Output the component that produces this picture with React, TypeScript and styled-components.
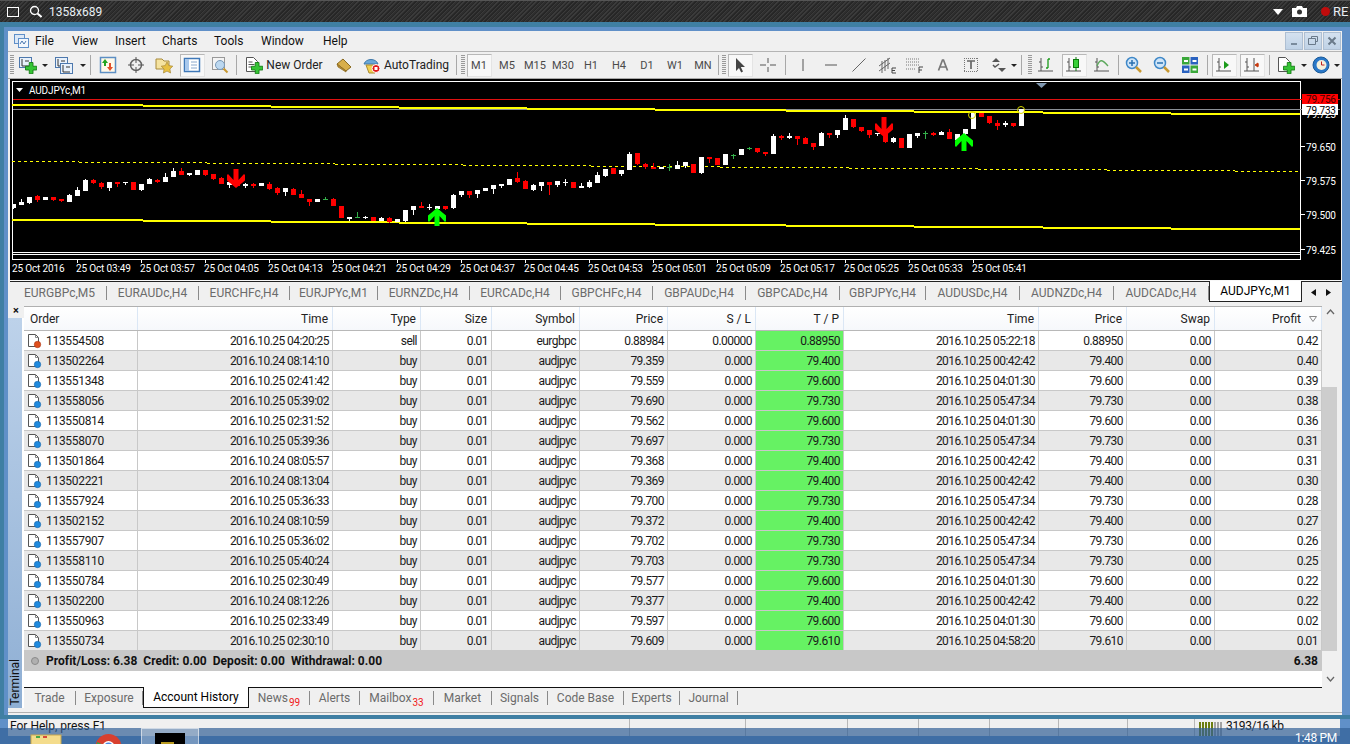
import React from "react";
import styled, { createGlobalStyle } from "styled-components";

const UI_FONT = `Roboto, "Noto Sans", "Liberation Sans", sans-serif`;

const GlobalStyle = createGlobalStyle`
  html, body { margin: 0; padding: 0; height: 744px; overflow: hidden; background: #6090c8; }
  body { font-family: ${UI_FONT}; font-size: 12px; color: #1a1a1a; }
  * { box-sizing: border-box; }
`;

// Top recorder bar
const RecorderBar = styled.div`
  height: 22px;
  display: flex;
  align-items: center;
  color: #e8eef2;
  font-size: 12px;
  border-top: 1px solid #555;
  background: repeating-linear-gradient(135deg, #262626 0 1px, #3b3b3b 1px 2px, #2e2e2e 2px 3px);
`;
const RecLeft = styled.div`
  display: flex;
  align-items: center;
  padding-left: 7px;
  gap: 10px;
  flex: 1;
`;
const RecSize = styled.span`
  margin-left: -3px;
`;
const RecRight = styled.div`
  display: flex;
  align-items: center;
  font-size: 13px;
`;
const CameraIcon = styled.svg`
  margin: 0 14px 0 9px;
`;
const RecLabel = styled.span`
  width: 17px;
  margin-left: 3px;
  overflow: hidden;
  white-space: nowrap;
`;

// Blue window frame
const Frame = styled.div`
  border-top: 5px solid #3f7fa3;
  border-left: 4px solid #3f7fa3;
  background: #6090c8;
  padding: 4px 8px 0 4px;
`;
const Window = styled.div`
  width: 1334px;
  background: #f0f0f0;
`;

const MenuBar = styled.div`
  height: 21px;
  display: flex;
  align-items: center;
  padding-left: 5px;
  border-bottom: 1px solid #b4b4b4;
`;
const AppIcon = styled.svg`
  margin-right: 6px;
`;
const MenuItem = styled.span<{ $w: number }>`
  width: ${(p) => p.$w}px;
  color: #111;
  font-size: 12px;
`;
const WinButtons = styled.div`
  margin-left: auto;
  margin-right: 1px;
  display: flex;
  gap: 1px;
`;
const WinButton = styled.div`
  width: 18px;
  height: 18px;
  background: linear-gradient(#d4e1ef, #bfd2e6);
  border: 1px solid #aebfd2;
  display: flex;
  align-items: center;
  justify-content: center;
`;

const Toolbar = styled.div`
  height: 27px;
  display: flex;
  align-items: center;
  padding-left: 2px;
  border-bottom: 1px solid #a8a8a8;
`;
const Grip = styled.div<{ $ml?: number }>`
  width: 4px;
  height: 20px;
  margin-left: ${(p) => p.$ml ?? 0}px;
  flex: none;
  background: repeating-linear-gradient(#9a9a9a 0 1px, transparent 1px 2px);
`;
const Sep = styled.div<{ $w: number }>`
  width: ${(p) => p.$w}px;
  height: 20px;
  flex: none;
  display: flex;
  justify-content: center;
  &::after { content: ""; width: 1px; background: #a8a8a8; }
`;
const ToolBtn = styled.div<{ $w?: number }>`
  width: ${(p) => p.$w ?? 28}px;
  height: 24px;
  flex: none;
  display: flex;
  align-items: center;
  justify-content: center;
  gap: 3px;
  color: #222;
  font-size: 12px;
`;
const ActiveFace = styled.div`
  width: 25px;
  height: 23px;
  display: flex;
  align-items: center;
  justify-content: center;
  border: 1px solid;
  border-color: #b8b8b8 #e4e4e4 #e4e4e4 #b8b8b8;
  background: #f8f8f8;
  background-image: radial-gradient(#e6e6e6 0.5px, transparent 0.6px);
  background-size: 2px 2px;
`;
const Period = styled.span`
  font-size: 11px;
  color: #4a4a4a;
`;
const CaretBox = styled.div<{ $w: number }>`
  width: ${(p) => p.$w}px;
  flex: none;
  display: flex;
  justify-content: center;
  &::after {
    content: "";
    border-left: 3px solid transparent;
    border-right: 3px solid transparent;
    border-top: 3px solid #222;
  }
`;

// Chart
const ChartWrap = styled.div`
  margin-left: 2px;
  width: 1331px;
  height: 202px;
  background: #000;
  border-bottom: 1px solid #f8f8f8;
`;
const ChartSvg = styled.svg`
  display: block;
  text {
    font-family: ${UI_FONT};
    font-size: 10px;
    letter-spacing: -0.15px;
    fill: #fff;
  }
  text.tag { fill: #000; }
  text.tagRed { fill: #400000; }
  rect, line, path.step { shape-rendering: crispEdges; }
`;

// Chart tabs
const ChartTabs = styled.div`
  height: 22px;
  display: flex;
  align-items: center;
  padding-left: 3px;
  background: #f0f0f0;
  border-top: 1px solid #222;
  margin-left: 2px;
`;
const ChartTab = styled.div<{ $w: number; $on?: boolean }>`
  width: ${(p) => p.$w}px;
  height: ${(p) => (p.$on ? "21px" : "14px")};
  margin-top: ${(p) => (p.$on ? "-1px" : "0")};
  align-self: ${(p) => (p.$on ? "flex-start" : "center")};
  flex: none;
  display: flex;
  align-items: center;
  justify-content: center;
  color: ${(p) => (p.$on ? "#000" : "#6b6b6b")};
  font-size: 12px;
  background: ${(p) => (p.$on ? "#fff" : "transparent")};
  ${(p) =>
    p.$on
      ? "border: 1px solid #222; border-top: none;"
      : "border-right: 1px solid #8a8a8a;"}
`;
const TabArrows = styled.div`
  width: 38px;
  height: 21px;
  margin-top: -1px;
  align-self: flex-start;
  display: flex;
  align-items: center;
  justify-content: space-around;
  padding: 0 4px;
  border-top: 1px solid #222;
`;

// Terminal
const Terminal = styled.div`
  display: flex;
  height: 405px;
`;
const Rail = styled.div`
  width: 16px;
  flex: none;
  display: flex;
  flex-direction: column;
  background: #fff;
`;
const RailClose = styled.div`
  height: 15px;
  background: #f0f0f0;
  font-size: 11px;
  font-weight: 700;
  text-align: center;
  line-height: 16px;
  color: #111;
`;
const RailBody = styled.div`
  flex: 1;
  margin-right: 2px;
  display: flex;
  align-items: flex-end;
  justify-content: center;
  padding-bottom: 2px;
  background: linear-gradient(#bdd2ea, #8fafd4);
`;
const RailLabel = styled.span`
  writing-mode: vertical-rl;
  transform: rotate(180deg);
  font-size: 12px;
  color: #111;
`;
const TermBody = styled.div`
  width: 1316px;
  flex: none;
  display: flex;
  flex-direction: column;
`;
const TermMain = styled.div`
  height: 384px;
  display: flex;
  background: #fff;
`;
const TableWrap = styled.div`
  width: 1298px;
  flex: none;
  padding-top: 3px;
  background: linear-gradient(#f0f0f0 3px, #fff 3px);
`;
const COLS = "114px 195px 88px 71px 88px 88px 88px 88px 195px 88px 88px 107px";
const HeadRow = styled.div`
  display: grid;
  grid-template-columns: ${COLS};
  height: 25px;
  border-top: 1px solid #b0b0b0;
  background: linear-gradient(#ffffff, #f6f8fb);
  border-bottom: 1px solid #b8b8b8;
`;
const HeadCell = styled.div<{ $left?: boolean }>`
  display: flex;
  align-items: center;
  justify-content: ${(p) => (p.$left ? "flex-start" : "flex-end")};
  padding: 0 4px 0 6px;
  gap: 8px;
  border-right: 1px solid #dbe7f5;
  color: #222;
`;
const Row = styled.div<{ $alt: boolean }>`
  display: grid;
  grid-template-columns: ${COLS};
  height: 20px;
  background: ${(p) => (p.$alt ? "#e8e8e8" : "#fff")};
  border-bottom: 1px solid #c8c8c8;
`;
const Cell = styled.div<{ $green?: boolean }>`
  display: flex;
  align-items: center;
  justify-content: flex-end;
  padding-right: 3px;
  border-right: 1px solid #c8c8c8;
  letter-spacing: -0.55px;
  color: #1a1a1a;
  white-space: nowrap;
  background: ${(p) => (p.$green ? "#66f263" : "transparent")};
`;
const OrderCell = styled(Cell)`
  justify-content: flex-start;
  padding-left: 3px;
  gap: 4px;
  letter-spacing: -0.3px;
`;
const Summary = styled.div`
  height: 20px;
  display: flex;
  align-items: center;
  padding: 0 4px 0 6px;
  background: #c8c8c8;
  font-weight: 700;
  color: #111;
  letter-spacing: 0.03px;
`;
const SumDot = styled.div`
  width: 8px;
  height: 8px;
  margin: 0 7px 0 1px;
  border-radius: 50%;
  border: 1.5px solid #8a8a8a;
  background: #b0b0b0;
`;
const SumItem = styled.span`
  margin-right: 6px;
`;
const SumTotal = styled.span`
  margin-left: auto;
`;
const Scrollbar = styled.div`
  width: 18px;
  flex: none;
  display: flex;
  flex-direction: column;
  background: #f0f0f0;
`;
const ScrollArrow = styled.div`
  height: 17px;
  display: flex;
  align-items: center;
  justify-content: center;
  padding-right: 2px;
`;
const ScrollTrack = styled.div`
  flex: 1;
  padding-top: 67px;
`;
const ScrollThumb = styled.div`
  width: 15px;
  height: 264px;
  background: #cdcdcd;
`;

const BottomTabs = styled.div`
  height: 21px;
  width: 1298px;
  display: flex;
  align-items: center;
  border-top: 1px solid #111;
`;
const BottomTab = styled.div<{ $w: number; $on?: boolean }>`
  width: ${(p) => p.$w}px;
  height: ${(p) => (p.$on ? "21px" : "14px")};
  margin-top: ${(p) => (p.$on ? "-1px" : "0")};
  flex: none;
  display: flex;
  align-items: center;
  justify-content: center;
  color: ${(p) => (p.$on ? "#000" : "#6b6b6b")};
  background: ${(p) => (p.$on ? "#fff" : "transparent")};
  ${(p) =>
    p.$on
      ? "border: 1px solid #111; border-top: none;"
      : "border-right: 1px solid #8a8a8a;"}
`;
const Badge = styled.span`
  font-size: 10px;
  color: #f01818;
  margin: 8px 0 0 1px;
`;
const TermFoot = styled.div`
  height: 7px;
  border-bottom: 3px solid #f0f0f0;
  &::before {
    content: "";
    display: block;
    height: 4px;
    border-bottom: 1px solid #b0b0b0;
  }
`;

// Status bar and taskbar
const TealBand = styled.div`
  height: 4px;
  background: #3f7fa3;
`;
const StatusFrame = styled.div`
  height: 25px;
  padding-left: 4px;
  padding-right: 10px;
  border-left: 4px solid #5f90c8;
  background: #6090c8;
`;
const StatusBar = styled.div`
  height: 17px;
  display: flex;
  align-items: flex-start;
  background: #f0f0f0;
  color: #111;
`;
const StatusHelp = styled.div`
  width: 621px;
  padding-left: 2px;
`;
const StatusSlot = styled.div<{ $w: number }>`
  width: ${(p) => p.$w}px;
  height: 17px;
  flex: none;
  border-left: 1px solid #b8b8b8;
  display: flex;
  gap: 3px;
  padding-left: 4px;
  letter-spacing: -0.35px;
`;
const Taskbar = styled.div`
  position: absolute;
  left: 0;
  top: 728px;
  width: 1350px;
  height: 16px;
  background: rgba(50, 95, 150, 0.7);
  display: flex;
  overflow: hidden;
  color: #fff;
`;
const TaskIcon = styled.div<{ $w: number; $ml: number }>`
  width: ${(p) => p.$w}px;
  margin-left: ${(p) => p.$ml}px;
  flex: none;
  padding-top: 6px;
`;
const TaskActive = styled.div`
  width: 58px;
  margin-left: 19px;
  flex: none;
  padding: 4px 13px 0;
  background: rgba(255, 255, 255, 0.28);
  border: 1px solid rgba(255, 255, 255, 0.55);
  border-bottom: none;
`;
const TaskThumb = styled.div`
  height: 14px;
  background: #000;
  padding: 9px 0 0 6px;
  &::after {
    content: "";
    display: block;
    width: 13px;
    height: 3px;
    background: #b89a20;
  }
`;
const TaskTray = styled.div`
  margin-left: auto;
  padding-top: 12px;
`;
const TaskClock = styled.div`
  margin-left: 28px;
  padding: 4px 13px 0 0;
  font-size: 12px;
  line-height: 12px;
  letter-spacing: -0.3px;
`;

// ---- icons ----
type IconProps = { children: React.ReactNode; w?: number; h?: number };
const Ico = ({ children, w = 18, h = 18 }: IconProps) => (
  <svg width={w} height={h} viewBox={`0 0 ${w} ${h}`} fill="none">
    {children}
  </svg>
);

const Plus = ({ x, y, s = 1.25 }: { x: number; y: number; s?: number }) => (
  <path
    transform={`translate(${x} ${y}) scale(${s})`}
    d="M3 0h3v3h3v3h-3v3h-3v-3h-3v-3h3z"
    fill="#35c435"
    stroke="#127a12"
    strokeWidth=".7"
  />
);

const MiniChart = ({ x, y }: { x: number; y: number }) => (
  <g>
    <rect x={x + 0.5} y={y + 0.5} width="12" height="10" fill="#e8f1fb" stroke="#4d78ad" />
    <path d={`M${x + 3} ${y + 2}v7M${x + 3} ${y + 9}h7M${x + 6} ${y + 4}h4`} stroke="#333" />
  </g>
);

const DocShape = () => (
  <path d="M1.500 1.500h7l4 4v10h-11z" fill="#fff" stroke="#555" />
);

const ICONS: Record<string, React.ReactNode> = {
  newChart: (
    <Ico>
      <MiniChart x={0} y={1} />
      <Plus x={6.5} y={6.5} />
    </Ico>
  ),
  profiles: (
    <Ico>
      <MiniChart x={0} y={1} />
      <MiniChart x={5} y={7} />
    </Ico>
  ),
  market: (
    <Ico>
      <rect x="1.500" y="1.500" width="15" height="15" fill="#fff9ea" stroke="#5d8fc4" strokeWidth="1.500" />
      <path d="M6 3l3 4H7v3H5V7H3z" fill="#22a522" />
      <path d="M11 15l-3-4h2V7h2v4h2z" fill="#e2502a" />
    </Ico>
  ),
  crosshair: (
    <Ico>
      <circle cx="9" cy="9" r="5.500" stroke="#666" strokeWidth="1.500" />
      <path d="M9 1v6M9 11v6M1 9h6M11 9h6" stroke="#555" />
    </Ico>
  ),
  folderStar: (
    <Ico>
      <path d="M1 3h6l2 2h5v8H1z" fill="#f5e3a0" stroke="#a88a3a" />
      <path d="M12 6l1.800 3.600 4 .6-2.900 2.800.7 4-3.600-1.900-3.600 1.900.7-4L6.200 10.200l4-.6z" fill="#e8c040" stroke="#a88a3a" strokeWidth=".7" />
    </Ico>
  ),
  navigator: (
    <Ico>
      <rect x="1.500" y="2.500" width="15" height="13" fill="#fff" stroke="#3f78b8" strokeWidth="1.500" />
      <rect x="2" y="3" width="4" height="12" fill="#a8c8ec" />
      <path d="M8 6h6M8 9h6M8 12h6" stroke="#8aa8cc" />
    </Ico>
  ),
  zoomDoc: (
    <Ico>
      <rect x="1.500" y="1.500" width="12" height="12" fill="#f4f4f4" stroke="#999" />
      <circle cx="9" cy="9" r="4.500" fill="#bcd8f0" stroke="#7898b8" />
      <path d="M12.500 12.500l4 4" stroke="#c89830" strokeWidth="2" />
    </Ico>
  ),
  newOrder: (
    <Ico>
      <DocShape />
      <path d="M3.500 6h4M3.500 8.500h6M3.500 11h3" stroke="#555" />
      <Plus x={6.5} y={6.5} />
    </Ico>
  ),
  book: (
    <Ico>
      <path d="M8 3l8 8-5 4-9-7z" fill="#d8ae4a" stroke="#8a6a20" />
      <path d="M2 8l1 3 8 5 0-1z" fill="#b88a30" stroke="#8a6a20" strokeWidth=".7" />
    </Ico>
  ),
  autoTrading: (
    <Ico>
      <path d="M1 8c2-6 12-6 14 0z" fill="#6aa8d8" stroke="#3f78a8" />
      <path d="M3 9h12l-3 8H6z" fill="#f2d050" stroke="#a88a30" />
      <circle cx="13" cy="12.500" r="4" fill="#e01818" stroke="#fff" />
      <rect x="11.500" y="11" width="3" height="3" fill="#fff" />
    </Ico>
  ),
  cursor: (
    <Ico>
      <path d="M5 2v13l3-3 2.200 4.500 1.800-1L9.800 11H14z" fill="#444" />
    </Ico>
  ),
  cross: (
    <Ico>
      <path d="M1 9h6M11 9h6M9 2v5M9 11v5" stroke="#555" />
    </Ico>
  ),
  vline: (
    <Ico>
      <path d="M9 3v12" stroke="#555" />
    </Ico>
  ),
  hline: (
    <Ico>
      <path d="M3 9h12" stroke="#555" />
    </Ico>
  ),
  trend: (
    <Ico>
      <path d="M2.500 15.500l13-13" stroke="#666" />
    </Ico>
  ),
  channel: (
    <Ico w={20}>
      <path d="M2 10L13 2M2 15L13 7M5 5v12M8 4v11M11 2v11" stroke="#666" />
      <path d="M15 12h4M15 12v5h4M15 14.500h3" stroke="#444" />
    </Ico>
  ),
  fibo: (
    <Ico w={20}>
      <path d="M1 3h14M1 6h14M1 9h14M1 13h10" stroke="#777" strokeDasharray="1 1" />
      <path d="M14 11v6M14 11h4M14 14h3" stroke="#444" />
    </Ico>
  ),
  letterA: (
    <Ico>
      <path d="M4.500 14.500L8.500 4h1l4 10.500M6 11h6" stroke="#777" strokeWidth="1.700" />
    </Ico>
  ),
  boxT: (
    <Ico>
      <path d="M2 2.500h14M2 15.500h14M2.500 2v14M15.500 2v14" stroke="#777" strokeDasharray="1 1" />
      <path d="M5 5h8M9 5v8" stroke="#666" strokeWidth="1.700" />
    </Ico>
  ),
  arrows: (
    <Ico>
      <path d="M6 2l4 4H2zM12 16l-4-4h8z" fill="#555" />
      <path d="M3 9l2 2 4-3" stroke="#555" strokeWidth="1.500" />
    </Ico>
  ),
  barChart: (
    <Ico>
      <path d="M4 2v13M1 15h15M2 6h2M4 11h2" stroke="#555" />
      <path d="M11 3h2M11 3v9M9 12h2" stroke="#1a9a1a" strokeWidth="1.300" />
    </Ico>
  ),
  candle: (
    <Ico>
      <path d="M4 2v13M1 15h15M2 6h2M4 11h2" stroke="#555" />
      <path d="M11 1v14" stroke="#0a7a0a" />
      <rect x="8.500" y="3.500" width="5" height="8" fill="#38d038" stroke="#0a7a0a" />
    </Ico>
  ),
  lineChart: (
    <Ico>
      <path d="M4 2v13M1 15h15M2 6h2M4 11h2" stroke="#555" />
      <path d="M4 10c3-8 6-6 11 0" stroke="#5ca85c" strokeWidth="1.300" />
    </Ico>
  ),
  zoomIn: (
    <Ico>
      <circle cx="7" cy="7" r="5.500" fill="#cfe5f8" stroke="#3f88c8" strokeWidth="1.500" />
      <path d="M4 7h6M7 4v6" stroke="#2a70b0" strokeWidth="1.500" />
      <path d="M11 11l5 5" stroke="#c89830" strokeWidth="2.500" />
    </Ico>
  ),
  zoomOut: (
    <Ico>
      <circle cx="7" cy="7" r="5.500" fill="#cfe5f8" stroke="#3f88c8" strokeWidth="1.500" />
      <path d="M4 7h6" stroke="#2a70b0" strokeWidth="1.500" />
      <path d="M11 11l5 5" stroke="#c89830" strokeWidth="2.500" />
    </Ico>
  ),
  tile: (
    <Ico>
      <rect x="1" y="1" width="7.500" height="7.500" fill="#3aa83a" />
      <rect x="9.500" y="1" width="7.500" height="7.500" fill="#2a62c0" />
      <rect x="1" y="9.500" width="7.500" height="7.500" fill="#2a62c0" />
      <rect x="9.500" y="9.500" width="7.500" height="7.500" fill="#3aa83a" />
      <path d="M3 5h4M11.500 5h4M3 13.500h4M11.500 13.500h4" stroke="#fff" strokeWidth="2" />
    </Ico>
  ),
  scroll: (
    <Ico>
      <path d="M4 2v13M1 15h15M2 6h2M4 11h2" stroke="#555" />
      <path d="M9 5l5 4-5 4z" fill="#1a9a1a" />
    </Ico>
  ),
  shift: (
    <Ico>
      <path d="M4 2v13M1 15h15M2 6h2M4 11h2M11 2v13" stroke="#555" />
      <path d="M16 9h-3M15 7l-3 2 3 2z" fill="#c83a10" stroke="#c83a10" />
    </Ico>
  ),
  addDoc: (
    <Ico>
      <DocShape />
      <Plus x={6.5} y={6.5} />
    </Ico>
  ),
  clock: (
    <Ico>
      <circle cx="9" cy="9" r="8" fill="#2a78c8" stroke="#1a5a98" />
      <circle cx="9.500" cy="9" r="5" fill="#f4f0dc" />
      <path d="M9.500 5.500V9h3" stroke="#c02020" />
    </Ico>
  ),
};

const DocRowIcon = ({ sell }: { sell: boolean }) => (
  <svg width="15" height="16" viewBox="0 0 15 16" fill="none">
    <path d="M1.500 1.500h7l3 3v9h-10z" fill="#fff" stroke="#555" />
    <path d="M8.500 1.500v3h3" stroke="#888" />
    <circle cx="10.500" cy="11.500" r="3.200" fill={sell ? "#e0501c" : "#1f8ade"} stroke={sell ? "#a83010" : "#1060a8"} strokeWidth=".6" />
  </svg>
);

// ---- chart data ----
// [bodyTop, bodyBottom, wickTop, wickBottom, colour] in page pixels, one candle every 8px
type Candle = [number, number, number, number, "w" | "r" | "g"];
const CANDLES: Candle[] = [
  [204,208,204,209,"w"],[202,205,199,205,"w"],[197,203,197,204,"w"],[196,200,195,202,"r"],[197,200,197,200,"w"],
  [197,200,197,201,"r"],[199,201,199,202,"r"],[195,202,194,202,"w"],[190,196,187,196,"w"],[180,191,179,191,"w"],
  [180,183,179,184,"r"],[183,187,182,189,"r"],[182,188,182,191,"w"],[182,184,182,187,"r"],[182,183,182,185,"w"],
  [182,190,182,190,"r"],[184,190,184,191,"w"],[179,184,178,184,"w"],[180,182,179,183,"r"],[177,182,173,182,"w"],
  [171,177,168,177,"w"],[171,175,168,175,"r"],[173,175,173,176,"w"],[170,175,170,175,"w"],[170,175,170,176,"r"],
  [174,179,174,180,"r"],[178,184,177,184,"r"],[182,185,182,188,"w"],[182,186,182,186,"r"],[184,186,183,188,"w"],
  [184,186,183,188,"r"],[183,186,183,186,"w"],[184,189,182,190,"r"],[188,193,187,195,"r"],[188,192,188,196,"w"],
  [189,195,188,195,"r"],[194,198,190,198,"r"],[199,202,199,206,"r"],[199,202,199,202,"w"],[199,200,197,200,"g"],
  [199,206,198,206,"r"],[206,218,206,218,"r"],[217,219,217,221,"w"],[217,218,212,218,"g"],[217,218,216,219,"w"],
  [217,221,217,221,"r"],[218,221,217,221,"w"],[218,222,217,223,"r"],[219,222,219,222,"w"],[210,221,210,222,"w"],
  [206,210,206,215,"w"],[206,208,202,208,"r"],[207,208,204,210,"w"],[206,209,206,212,"w"],[206,209,206,210,"r"],
  [195,208,194,209,"w"],[191,195,191,197,"w"],[191,195,191,198,"r"],[190,194,190,198,"w"],[188,191,188,191,"w"],
  [185,189,185,194,"w"],[184,186,184,188,"w"],[179,185,179,185,"w"],[178,182,172,183,"r"],[181,189,180,189,"r"],
  [185,190,184,191,"w"],[182,186,182,191,"w"],[182,185,182,195,"r"],[181,185,181,187,"w"],[182,183,179,186,"w"],
  [182,188,182,188,"r"],[186,188,183,188,"w"],[182,187,180,188,"w"],[175,183,172,183,"w"],[169,176,169,177,"w"],
  [168,174,168,174,"r"],[170,174,170,176,"w"],[154,170,152,170,"w"],[153,164,153,165,"r"],[164,167,163,169,"r"],
  [167,169,163,169,"r"],[167,169,167,169,"w"],[167,168,164,171,"g"],[165,169,161,169,"w"],[162,166,162,168,"w"],
  [164,173,164,173,"r"],[157,173,157,174,"w"],[157,159,157,163,"r"],[158,165,158,165,"r"],[154,165,154,165,"w"],
  [155,156,154,159,"g"],[149,155,149,155,"w"],[148,149,147,150,"g"],[148,152,148,153,"r"],[152,154,152,156,"r"],
  [136,154,134,154,"w"],[136,138,135,140,"r"],[136,138,133,139,"w"],[136,139,136,145,"r"],[138,144,137,144,"r"],
  [143,147,143,150,"r"],[133,146,132,146,"w"],[133,135,133,138,"r"],[130,135,130,138,"w"],[118,130,115,130,"w"],
  [119,127,119,128,"r"],[127,131,127,132,"r"],[130,135,130,138,"r"],[133,134,133,136,"w"],[132,142,132,143,"r"],
  [138,142,137,143,"w"],[138,148,138,148,"r"],[134,148,134,148,"w"],[133,136,133,138,"w"],[133,134,131,139,"g"],
  [133,135,132,136,"r"],[132,135,131,135,"w"],[132,139,129,139,"r"],[134,140,134,140,"w"],[129,134,129,139,"w"],
  [113,129,113,129,"w"],[113,117,113,117,"r"],[116,123,116,124,"r"],[123,126,120,130,"r"],[123,125,121,127,"w"],
  [123,126,123,127,"r"],[109,126,109,126,"w"],
];
const CANDLE_COLOR = { w: "#ffffff", r: "#ff0000", g: "#34b04a" };

const UPPER = [12, 143, 271, 399, 527, 655, 786, 914, 1043, 1171, 1300];
const stepPath = (xs: number[], startY: number) =>
  xs.slice(0, -1).map((x, i) => `M${x} ${startY + i}H${xs[i + 1]}`).join("");
const MID = [12, 79, 207, 335, 463, 591, 720, 849, 978, 1107, 1235, 1300];

const DATE_LABELS = [
  "25 Oct 2016", "25 Oct 03:49", "25 Oct 03:57", "25 Oct 04:05", "25 Oct 04:13", "25 Oct 04:21", "25 Oct 04:29", "25 Oct 04:37",
  "25 Oct 04:45", "25 Oct 04:53", "25 Oct 05:01", "25 Oct 05:09", "25 Oct 05:17", "25 Oct 05:25", "25 Oct 05:33", "25 Oct 05:41",
];
const PRICE_LABELS: [string, number][] = [["79.650", 151], ["79.575", 185], ["79.500", 219], ["79.425", 254]];

const Arrow = ({ x, y, len, up }: { x: number; y: number; len: number; up?: boolean }) => {
  // shaft plus a swept-back head, pointing down from (x, y), flipped for buy signals
  const d = `M-2.500 0h5v${len - 8}l5.500-6 1 1v5.500l-9 ${7.5}-9-${7.5}v-5.500l1-1 5.500 6z`;
  const t = up ? `translate(${x} ${y + len}) scale(1 -1)` : `translate(${x} ${y})`;
  return <path d={d} transform={t} fill={up ? "#00ff00" : "#ff0000"} />;
};

const Chart = () => (
  <ChartSvg width={1331} height={201} viewBox="10 79 1331 201">
    <path d="M12.500 82V259.500H1300.500V82" stroke="#fff" fill="none" className="step" />
    <path d="M12 81.500H1301M12 252.500H1301M12 254.500H1301" stroke="#fff" fill="none" className="step" />
    <path d="M1036 83h11l-5.500 5z" fill="#7f97af" />
    <line x1="13" y1="99.500" x2="1340" y2="99.500" stroke="#e01010" />
    <line x1="13" y1="109.500" x2="1340" y2="109.500" stroke="#8a8f96" />
    <path d={stepPath(UPPER, 105)} stroke="#ffff00" strokeWidth="2" className="step" />
    <path d={stepPath(UPPER, 220)} stroke="#ffff00" strokeWidth="2" className="step" />
    <path d={stepPath(MID, 161.5)} stroke="#ffff00" strokeDasharray="3 3" className="step" />
    {CANDLES.map(([t, b, wt, wb, c], i) => (
      <g key={i} fill={CANDLE_COLOR[c]}>
        <rect x={13 + 8 * i} y={wt} width="1" height={wb - wt} />
        <rect x={Math.max(13, 11 + 8 * i)} y={t} width={i === 0 ? 3 : 5} height={b - t} />
      </g>
    ))}
    <Arrow x={236} y={169} len={19} />
    <Arrow x={884} y={117} len={20} />
    <Arrow x={437} y={208} len={18} up />
    <Arrow x={964} y={133} len={18} up />
    <circle cx="972" cy="115" r="3.500" stroke="#d8d800" fill="none" />
    <circle cx="1021" cy="110" r="3.500" stroke="#d8d800" fill="none" />
    <path d="M16 88h7l-3.500 4z" fill="#fff" />
    <text x="29" y="94">AUDJPYc,M1</text>
    {DATE_LABELS.map((label, i) => (
      <g key={label}>
        <text x={12 + 64 * i} y="272">{label}</text>
        {i > 0 && <line x1={13 + 64 * i + 0.5} y1="259" x2={13 + 64 * i + 0.5} y2="263" stroke="#fff" />}
      </g>
    ))}
    <text x="1306" y="118">79.725</text>
    {PRICE_LABELS.map(([label, y]) => (
      <g key={label}>
        <line x1="1300" y1={y - 4.5} x2="1305" y2={y - 4.5} stroke="#fff" />
        <text x="1306" y={y}>{label}</text>
      </g>
    ))}
    <rect x="1302" y="94" width="36" height="10" fill="#ff0000" />
    <rect x="1302" y="104" width="36" height="11" fill="#ffffff" />
    <text x="1306" y="103" className="tagRed">79.756</text>
    <text x="1306" y="113.500" className="tag">79.733</text>
  </ChartSvg>
);

// ---- table data ----
const ROWS = [
  ["113554508","2016.10.25 04:20:25","sell","0.01","eurgbpc","0.88984","0.00000","0.88950","2016.10.25 05:22:18","0.88950","0.00","0.42"],
  ["113502264","2016.10.24 08:14:10","buy","0.01","audjpyc","79.359","0.000","79.400","2016.10.25 00:42:42","79.400","0.00","0.40"],
  ["113551348","2016.10.25 02:41:42","buy","0.01","audjpyc","79.559","0.000","79.600","2016.10.25 04:01:30","79.600","0.00","0.39"],
  ["113558056","2016.10.25 05:39:02","buy","0.01","audjpyc","79.690","0.000","79.730","2016.10.25 05:47:34","79.730","0.00","0.38"],
  ["113550814","2016.10.25 02:31:52","buy","0.01","audjpyc","79.562","0.000","79.600","2016.10.25 04:01:30","79.600","0.00","0.36"],
  ["113558070","2016.10.25 05:39:36","buy","0.01","audjpyc","79.697","0.000","79.730","2016.10.25 05:47:34","79.730","0.00","0.31"],
  ["113501864","2016.10.24 08:05:57","buy","0.01","audjpyc","79.368","0.000","79.400","2016.10.25 00:42:42","79.400","0.00","0.31"],
  ["113502221","2016.10.24 08:13:04","buy","0.01","audjpyc","79.369","0.000","79.400","2016.10.25 00:42:42","79.400","0.00","0.30"],
  ["113557924","2016.10.25 05:36:33","buy","0.01","audjpyc","79.700","0.000","79.730","2016.10.25 05:47:34","79.730","0.00","0.28"],
  ["113502152","2016.10.24 08:10:59","buy","0.01","audjpyc","79.372","0.000","79.400","2016.10.25 00:42:42","79.400","0.00","0.27"],
  ["113557907","2016.10.25 05:36:02","buy","0.01","audjpyc","79.702","0.000","79.730","2016.10.25 05:47:34","79.730","0.00","0.26"],
  ["113558110","2016.10.25 05:40:24","buy","0.01","audjpyc","79.703","0.000","79.730","2016.10.25 05:47:34","79.730","0.00","0.25"],
  ["113550784","2016.10.25 02:30:49","buy","0.01","audjpyc","79.577","0.000","79.600","2016.10.25 04:01:30","79.600","0.00","0.22"],
  ["113502200","2016.10.24 08:12:26","buy","0.01","audjpyc","79.377","0.000","79.400","2016.10.25 00:42:42","79.400","0.00","0.22"],
  ["113550963","2016.10.25 02:33:49","buy","0.01","audjpyc","79.597","0.000","79.600","2016.10.25 04:01:30","79.600","0.00","0.02"],
  ["113550734","2016.10.25 02:30:10","buy","0.01","audjpyc","79.609","0.000","79.610","2016.10.25 04:58:20","79.610","0.00","0.01"],
];
const HEADERS = ["Order","Time","Type","Size","Symbol","Price","S / L","T / P","Time","Price","Swap","Profit"];

const MENU: [string, number][] = [["File", 37], ["View", 43], ["Insert", 47], ["Charts", 52], ["Tools", 47], ["Window", 62], ["Help", 40]];
const PERIODS = ["M1","M5","M15","M30","H1","H4","D1","W1","MN"];
const CHART_TABS: [string, number][] = [
  ["EURGBPc,M5", 94],["EURAUDc,H4", 92],["EURCHFc,H4", 91],["EURJPYc,M1", 88],["EURNZDc,H4", 92],["EURCADc,H4", 91],["GBPCHFc,H4", 92],
  ["GBPAUDc,H4", 93],["GBPCADc,H4", 94],["GBPJPYc,H4", 86],["AUDUSDc,H4", 94],["AUDNZDc,H4", 94],["AUDCADc,H4", 95],
];
const BOTTOM_TABS: { label: string; w: number; badge?: string; on?: boolean }[] = [
  { label: "Trade", w: 52 },
  { label: "Exposure", w: 67 },
  { label: "Account History", w: 106, on: true },
  { label: "News", w: 61, badge: "99" },
  { label: "Alerts", w: 50 },
  { label: "Mailbox", w: 74, badge: "33" },
  { label: "Market", w: 58 },
  { label: "Signals", w: 56 },
  { label: "Code Base", w: 76 },
  { label: "Experts", w: 56 },
  { label: "Journal", w: 58 },
];
const STATUS_SLOTS = [116, 102, 71, 71, 69, 69, 67];

const Tool = ({ icon, w, on }: { icon: string; w?: number; on?: boolean }) => (
  <ToolBtn $w={w}>{on ? <ActiveFace>{ICONS[icon]}</ActiveFace> : ICONS[icon]}</ToolBtn>
);

const Chevron = ({ up }: { up?: boolean }) => (
  <svg width="9" height="6" viewBox="0 0 9 6" fill="none">
    <path d={up ? "M1 5l3.500-4L8 5" : "M1 1l3.500 4L8 1"} stroke="#666" strokeWidth="1.300" />
  </svg>
);

const TabTriangle = ({ left }: { left?: boolean }) => (
  <svg width="5" height="7" viewBox="0 0 5 7">
    <path d={left ? "M5 0v7L0 3.500z" : "M0 0v7l5-3.500z"} fill="#111" />
  </svg>
);

export default function App() {
  return (
    <>
      <GlobalStyle />
      <RecorderBar>
        <RecLeft>
          <svg width="12" height="10" viewBox="0 0 12 10" fill="none">
            <rect x=".5" y=".5" width="11" height="9" stroke="#fff" />
          </svg>
          <svg width="13" height="13" viewBox="0 0 13 13" fill="none">
            <circle cx="5.500" cy="5.500" r="4" stroke="#fff" strokeWidth="1.300" />
            <path d="M8.500 8.500l4 3.500" stroke="#fff" strokeWidth="2" />
          </svg>
          <RecSize>1358x689</RecSize>
        </RecLeft>
        <RecRight>
          <svg width="10" height="6" viewBox="0 0 10 6">
            <path d="M0 0h10L5 6z" fill="#fff" />
          </svg>
          <CameraIcon width="15" height="11" viewBox="0 0 15 11" fill="none">
            <path d="M0 2h4l1-2h5l1 2h4v9H0z" fill="#fff" />
            <circle cx="7.500" cy="6" r="2.500" fill="#333" />
          </CameraIcon>
          <svg width="9" height="9" viewBox="0 0 9 9">
            <circle cx="4.500" cy="4.500" r="4.500" fill="#c00c0c" />
          </svg>
          <RecLabel>RE</RecLabel>
        </RecRight>
      </RecorderBar>

      <Frame>
        <Window>
          <MenuBar>
            <AppIcon width="16" height="16" viewBox="0 0 16 16" fill="none">
              <rect x="1.500" y="1.500" width="10" height="9" fill="#dce8f6" stroke="#5f8fc8" />
              <rect x="5.500" y="5.500" width="10" height="9" fill="#f2f7fd" stroke="#5f8fc8" />
              <path d="M7 11l2-3 2 3 2-3" stroke="#4a78b0" />
            </AppIcon>
            {MENU.map(([label, w]) => (
              <MenuItem key={label} $w={w}>{label}</MenuItem>
            ))}
            <WinButtons>
              <WinButton>
                <svg width="10" height="10" viewBox="0 0 10 10"><rect x="2" y="7" width="6" height="2" fill="#7a8b9c" /></svg>
              </WinButton>
              <WinButton>
                <svg width="10" height="10" viewBox="0 0 10 10" fill="none"><path d="M3.500 2.500V.5h6v5h-2M.5 2.500h7v6h-7z" stroke="#6a7a8a" /></svg>
              </WinButton>
              <WinButton>
                <svg width="10" height="10" viewBox="0 0 10 10" fill="none"><path d="M1.500 1.500l7 7M8.500 1.500l-7 7" stroke="#6a7a8a" strokeWidth="2" /></svg>
              </WinButton>
            </WinButtons>
          </MenuBar>

          <Toolbar>
            <Grip />
            <Tool icon="newChart" w={27} />
            <CaretBox $w={8} />
            <Tool icon="profiles" w={30} />
            <CaretBox $w={8} />
            <Sep $w={7} />
            <Tool icon="market" />
            <Tool icon="crosshair" />
            <Tool icon="folderStar" />
            <Tool icon="navigator" on />
            <Tool icon="zoomDoc" />
            <Sep $w={5} />
            <ToolBtn $w={90}>{ICONS.newOrder}New Order</ToolBtn>
            <Tool icon="book" w={29} />
            <ToolBtn $w={96}>{ICONS.autoTrading}AutoTrading</ToolBtn>
            <Sep $w={4} />
            <Grip $ml={3} />
            <ToolBtn $w={28}><ActiveFace><Period>M1</Period></ActiveFace></ToolBtn>
            {PERIODS.slice(1).map((p) => (
              <ToolBtn key={p}><Period>{p}</Period></ToolBtn>
            ))}
            <Sep $w={3} />
            <Grip $ml={2} />
            <Tool icon="cursor" on />
            <Tool icon="cross" />
            <Sep $w={7} />
            <Tool icon="vline" />
            <Tool icon="hline" />
            <Tool icon="trend" />
            <Tool icon="channel" />
            <Tool icon="fibo" />
            <Tool icon="letterA" />
            <Tool icon="boxT" />
            <Tool icon="arrows" />
            <CaretBox $w={2} />
            <Sep $w={13} />
            <Grip />
            <Tool icon="barChart" />
            <Tool icon="candle" on />
            <Tool icon="lineChart" />
            <Sep $w={4} />
            <Tool icon="zoomIn" />
            <Tool icon="zoomOut" />
            <Tool icon="tile" />
            <Sep $w={6} />
            <Tool icon="scroll" on />
            <Tool icon="shift" on />
            <Sep $w={6} />
            <Tool icon="addDoc" />
            <CaretBox $w={7} />
            <Tool icon="clock" />
            <CaretBox $w={4} />
          </Toolbar>

          <ChartWrap>
            <Chart />
          </ChartWrap>

          <ChartTabs>
            {CHART_TABS.map(([label, w]) => (
              <ChartTab key={label} $w={w}>{label}</ChartTab>
            ))}
            <ChartTab $w={93} $on>AUDJPYc,M1</ChartTab>
            <TabArrows>
              <TabTriangle left />
              <TabTriangle />
            </TabArrows>
          </ChartTabs>

          <Terminal>
            <Rail>
              <RailClose>×</RailClose>
              <RailBody>
                <RailLabel>Terminal</RailLabel>
              </RailBody>
            </Rail>
            <TermBody>
              <TermMain>
                <TableWrap>
                  <HeadRow>
                    {HEADERS.map((h, i) => (
                      <HeadCell key={i} $left={i === 0}>
                        {h}
                        {h === "Profit" && (
                          <svg width="8" height="6" viewBox="0 0 8 6" fill="none">
                            <path d="M.5.5h7L4 5.500z" stroke="#888" />
                          </svg>
                        )}
                      </HeadCell>
                    ))}
                  </HeadRow>
                  {ROWS.map((row, r) => (
                    <Row key={row[0]} $alt={r % 2 === 1}>
                      {row.map((v, c) =>
                        c === 0 ? (
                          <OrderCell key={c}>
                            <DocRowIcon sell={row[2] === "sell"} />
                            {v}
                          </OrderCell>
                        ) : (
                          <Cell key={c} $green={c === 7}>{v}</Cell>
                        )
                      )}
                    </Row>
                  ))}
                  <Summary>
                    <SumDot />
                    <SumItem>Profit/Loss: 6.38</SumItem>
                    <SumItem>Credit: 0.00</SumItem>
                    <SumItem>Deposit: 0.00</SumItem>
                    <SumItem>Withdrawal: 0.00</SumItem>
                    <SumTotal>6.38</SumTotal>
                  </Summary>
                </TableWrap>
                <Scrollbar>
                  <ScrollArrow><Chevron up /></ScrollArrow>
                  <ScrollTrack>
                    <ScrollThumb />
                  </ScrollTrack>
                  <ScrollArrow><Chevron /></ScrollArrow>
                </Scrollbar>
              </TermMain>
              <BottomTabs>
                {BOTTOM_TABS.map((t) => (
                  <BottomTab key={t.label} $w={t.w} $on={t.on}>
                    {t.label}
                    {t.badge && <Badge>{t.badge}</Badge>}
                  </BottomTab>
                ))}
              </BottomTabs>
            </TermBody>
          </Terminal>
          <TermFoot />
        </Window>
      </Frame>

      <TealBand />
      <StatusFrame>
        <StatusBar>
          <StatusHelp>For Help, press F1</StatusHelp>
          {STATUS_SLOTS.map((w, i) => (
            <StatusSlot key={i} $w={w} />
          ))}
          <StatusSlot $w={140}>
            <svg width="24" height="17" viewBox="0 0 24 17">
              <path d="M1 3v14M4 3v14M7 3v14M10 3v14M13 3v14" stroke="#6b7d10" strokeWidth="2" />
              <path d="M16 3v14M19 3v14M22 3v14" stroke="#555" strokeWidth="1" />
            </svg>
            3193/16 kb
          </StatusSlot>
        </StatusBar>
      </StatusFrame>

      <Taskbar>
        <TaskIcon $w={32} $ml={30}>
          <svg width="32" height="12" viewBox="0 0 32 12">
            <rect x="1" y="1" width="30" height="11" fill="#f4dc8c" stroke="#c8a850" />
            <rect x="6" y="2" width="4" height="2" fill="#4aa84a" />
            <rect x="13" y="2" width="4" height="2" fill="#d84a3a" />
          </svg>
        </TaskIcon>
        <TaskIcon $w={27} $ml={33}>
          <svg width="27" height="12" viewBox="0 0 27 12">
            <circle cx="13.500" cy="13" r="13" fill="#d8402f" />
            <path d="M13.500 13L2 20V8z" fill="#3aa04a" />
            <circle cx="13.500" cy="13" r="6" fill="#fff" />
            <circle cx="13.500" cy="13" r="4.500" fill="#4a88e0" />
          </svg>
        </TaskIcon>
        <TaskActive>
          <TaskThumb />
        </TaskActive>
        <TaskTray>
          <svg width="12" height="4" viewBox="0 0 12 4">
            <path d="M1 4V1h4v3M7 4V0h4v4" fill="#cfd6df" />
          </svg>
        </TaskTray>
        <TaskClock>1:48 PM</TaskClock>
      </Taskbar>
    </>
  );
}
